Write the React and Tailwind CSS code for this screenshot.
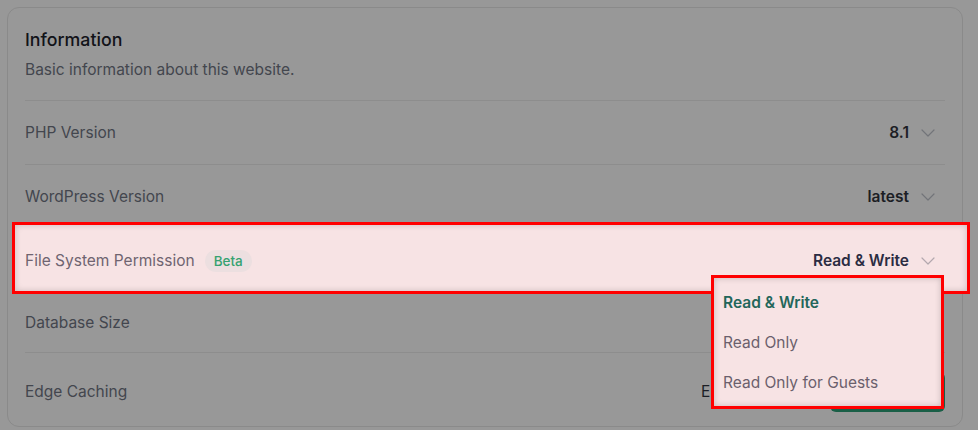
import React from "react";

function Chevron({ color }) {
  return (
    <svg width="14" height="8" viewBox="0 0 14 8" fill="none" className="shrink-0">
      <path d="M1 1l6 6 6-6" stroke={color} strokeWidth="1.2" strokeLinecap="round" strokeLinejoin="round" />
    </svg>
  );
}

function Row({ label, value, h = "h-[64px]" }) {
  return (
    <div className={`flex items-center justify-between border-b border-[#8d8d8d] ${h}`}>
      <span className="text-[15.5px] leading-[22px] text-[#43464e]">{label}</span>
      {value && (
        <div className="flex items-center gap-[12px] pr-[10px]">
          <span className="text-[15.5px] leading-[22px] font-semibold text-[#1c1e25]">{value}</span>
          <Chevron color="#727479" />
        </div>
      )}
    </div>
  );
}

export default function App() {
  return (
    <div
      className="w-[978px] h-[430px] overflow-hidden bg-[#989898] pt-[7px] pl-[7px] pr-[15px]"
      style={{ fontFamily: "Inter, 'Noto Sans', sans-serif" }}
    >
      <div className="rounded-[12px] border border-[#8a8a8a] px-[17px] pt-[20px] h-[420px]">
        <div className="border-b border-[#8d8d8d] pb-[19px]">
          <div className="text-[17.75px] leading-[24px] font-medium text-[#121318]">Information</div>
          <div className="mt-[7px] text-[15.5px] leading-[22px] text-[#43464e]">Basic information about this website.</div>
        </div>
        <Row label="PHP Version" value="8.1" />
        <Row label="WordPress Version" value="latest" />
        <div className="relative h-[64px] border-b border-[#8d8d8d]">
          <div className="absolute left-[-13px] right-[-25px] top-[-7px] bottom-[-2px] z-0 border-[3px] border-[#ff0000] bg-[#f7e3e4] shadow-[inset_0_0_6px_rgba(0,0,0,0.18)]" />
          <div className="relative z-10 flex h-full items-center justify-between">
            <div className="flex items-center gap-[10px]">
              <span className="text-[15.5px] leading-[22px] text-[#6f6470]">File System Permission</span>
              <span className="rounded-full bg-[#ecdfe0] px-[9px] py-[2px] text-[13.5px] leading-[18px] font-medium text-[#35a271]">Beta</span>
            </div>
            <div className="flex items-center gap-[12px] pr-[10px]">
              <span className="text-[15.5px] leading-[22px] font-semibold text-[#2b2c42]">Read &amp; Write</span>
              <Chevron color="#b3a8ae" />
            </div>
          </div>
          <div className="absolute right-[1px] top-[46px] z-30 w-[233px] border-[3px] border-[#ff0000] bg-[#f7e3e4] pt-[5px] pb-[3px] pl-[9px] shadow-[inset_0_0_6px_rgba(0,0,0,0.2)]">
            <div className="flex h-[40px] items-center text-[15.5px] font-semibold text-[#23665a]">Read &amp; Write</div>
            <div className="flex h-[40px] items-center text-[15.5px] text-[#6b5f6c]">Read Only</div>
            <div className="flex h-[40px] items-center text-[15.5px] text-[#6b5f6c]">Read Only for Guests</div>
          </div>
        </div>
        <Row label="Database Size" h="h-[60px]" />
        <div className="flex h-[78px] items-center justify-between">
          <span className="text-[15.5px] leading-[22px] text-[#43464e]">Edge Caching</span>
          <div className="flex items-center gap-[70px] pb-[1px]">
            <span className="text-[15.5px] leading-[22px] text-[#1c1e25]">Enabled</span>
            <div className="h-[40px] w-[115px] rounded-[6px] bg-[#1a5f47]" />
          </div>
        </div>
      </div>
    </div>
  );
}
